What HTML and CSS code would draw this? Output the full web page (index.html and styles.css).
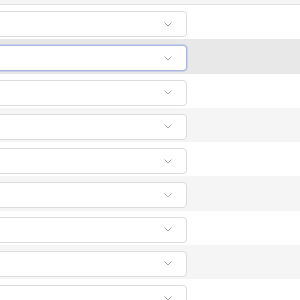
FILE: index.html
```html
<!DOCTYPE html>
<html>
<head>
<meta charset="utf-8">
<link rel="stylesheet" href="styles.css">
</head>
<body>
<div class="table">
  <div class="head"></div>
  <div class="row"><div class="select"><svg class="chev" width="8" height="5" viewBox="0 0 8 5"><path d="M0.5 0.5 L4 4 L7.5 0.5" fill="none" stroke="#a8a8a8" stroke-width="1"/></svg></div></div>
  <div class="row alt hover"><div class="select focus"><svg class="chev" width="8" height="5" viewBox="0 0 8 5"><path d="M0.5 0.5 L4 4 L7.5 0.5" fill="none" stroke="#a8a8a8" stroke-width="1"/></svg></div></div>
  <div class="row"><div class="select"><svg class="chev" width="8" height="5" viewBox="0 0 8 5"><path d="M0.5 0.5 L4 4 L7.5 0.5" fill="none" stroke="#a8a8a8" stroke-width="1"/></svg></div></div>
  <div class="row alt"><div class="select"><svg class="chev" width="8" height="5" viewBox="0 0 8 5"><path d="M0.5 0.5 L4 4 L7.5 0.5" fill="none" stroke="#a8a8a8" stroke-width="1"/></svg></div></div>
  <div class="row"><div class="select"><svg class="chev" width="8" height="5" viewBox="0 0 8 5"><path d="M0.5 0.5 L4 4 L7.5 0.5" fill="none" stroke="#a8a8a8" stroke-width="1"/></svg></div></div>
  <div class="row alt"><div class="select"><svg class="chev" width="8" height="5" viewBox="0 0 8 5"><path d="M0.5 0.5 L4 4 L7.5 0.5" fill="none" stroke="#a8a8a8" stroke-width="1"/></svg></div></div>
  <div class="row"><div class="select"><svg class="chev" width="8" height="5" viewBox="0 0 8 5"><path d="M0.5 0.5 L4 4 L7.5 0.5" fill="none" stroke="#a8a8a8" stroke-width="1"/></svg></div></div>
  <div class="row alt"><div class="select"><svg class="chev" width="8" height="5" viewBox="0 0 8 5"><path d="M0.5 0.5 L4 4 L7.5 0.5" fill="none" stroke="#a8a8a8" stroke-width="1"/></svg></div></div>
  <div class="row"><div class="select"><svg class="chev" width="8" height="5" viewBox="0 0 8 5"><path d="M0.5 0.5 L4 4 L7.5 0.5" fill="none" stroke="#a8a8a8" stroke-width="1"/></svg></div></div>
</div>
</body>
</html>
```

FILE: styles.css
```css
html, body {
  margin: 0;
  padding: 0;
  background: #ffffff;
  font-family: "Liberation Sans", Arial, sans-serif;
  overflow: hidden;
}
.table {
  width: 300px;
}
.head {
  height: 4px;
  background: #f5f5f5;
  border-bottom: 1px solid #e3e3e3;
}
.row {
  height: 34.25px;
  box-sizing: border-box;
  padding-top: 6px;
  background: #ffffff;
}
.row.alt {
  background: #f5f5f5;
}
.row.hover {
  background: #e8e8e8;
}
.select {
  box-sizing: border-box;
  height: 26px;
  width: 207px;
  margin-left: -20px;
  background: #ffffff;
  border: 1px solid #dcdcdc;
  border-radius: 4px;
  display: flex;
  align-items: center;
  justify-content: flex-end;
  padding-right: 14px;
}
.select.focus {
  border-color: #a9b6e2;
  box-shadow: 0 0 0 1px rgba(175, 188, 232, 0.55);
}
.chev {
  display: block;
}
```
